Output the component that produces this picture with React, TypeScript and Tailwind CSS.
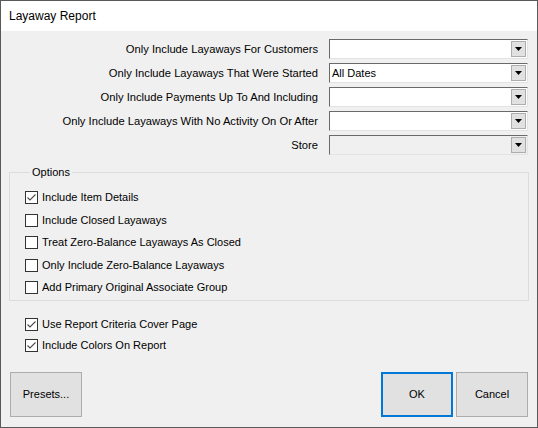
import React from "react";

const criteria = [
  { label: "Only Include Layaways For Customers", value: "" },
  { label: "Only Include Layaways That Were Started", value: "All Dates" },
  { label: "Only Include Payments Up To And Including", value: "" },
  { label: "Only Include Layaways With No Activity On Or After", value: "" },
  { label: "Store", value: "", disabled: true },
];

const options = [
  { label: "Include Item Details", checked: true },
  { label: "Include Closed Layaways", checked: false },
  { label: "Treat Zero-Balance Layaways As Closed", checked: false },
  { label: "Only Include Zero-Balance Layaways", checked: false },
  { label: "Add Primary Original Associate Group", checked: false },
];

function Combo({ value, disabled }: { value: string; disabled?: boolean }) {
  return (
    <div
      className={`flex h-[20px] w-[199px] items-center border border-t-[#6a6a6a] border-l-[#6a6a6a] border-r-[#e3e3e3] border-b-[#e3e3e3] ${
        disabled ? "bg-[#f0f0f0]" : "bg-white"
      }`}
    >
      <span className="flex-1 pl-[2px] leading-[16px]">{value}</span>
      <div className="mr-[1px] flex h-[16px] w-[15px] items-center justify-center border border-[#adadad] bg-[#e1e1e1]">
        <svg width="7" height="4" viewBox="0 0 7 4">
          <path d="M0 0h7L3.5 4z" fill="#000" />
        </svg>
      </div>
    </div>
  );
}

function Check({ label, checked }: { label: string; checked: boolean }) {
  return (
    <div className="flex h-[13px] items-center gap-[4px]">
      <div className="flex h-[13px] w-[13px] shrink-0 items-center justify-center border border-[#333] bg-white">
        {checked && (
          <svg width="11" height="11" viewBox="0 0 11 11">
            <path d="M1.5 5.5l2.5 2.5 5.5-5.5" fill="none" stroke="#4a4a4a" strokeWidth="1.1" />
          </svg>
        )}
      </div>
      <span className="leading-[13px]">{label}</span>
    </div>
  );
}

function Button({ label, focused }: { label: string; focused?: boolean }) {
  return (
    <button
      className={`flex h-[45px] w-[72px] items-center justify-center bg-[#e1e1e1] ${
        focused ? "border-2 border-[#0078d7]" : "border border-[#adadad]"
      }`}
    >
      {label}
    </button>
  );
}

export default function App() {
  return (
    <div className="flex h-[428px] w-[538px] flex-col border border-[#595959] bg-[#f0f0f0] font-['Liberation_Sans',Arial,sans-serif] text-[11px] text-black">
      {/* Title bar */}
      <div className="flex h-[30px] items-center bg-white pl-[8px] text-[12px]">Layaway Report</div>

      {/* Criteria */}
      <div className="flex flex-col gap-[4px] pr-[9px] pt-[8px]">
        {criteria.map((c) => (
          <div key={c.label} className="flex items-center justify-end gap-[11px]">
            <span className="text-[11.2px]">{c.label}</span>
            <Combo value={c.value} disabled={c.disabled} />
          </div>
        ))}
      </div>

      {/* Options group */}
      <fieldset className="mx-[8px] mt-[11px] border border-[#dcdcdc] pb-[6px] pl-[15px]">
        <legend className="ml-[5px] px-[2px] leading-[13px]">Options</legend>
        <div className="flex flex-col gap-[9.5px] pt-[12px]">
          {options.map((o) => (
            <Check key={o.label} label={o.label} checked={o.checked} />
          ))}
        </div>
      </fieldset>

      <div className="flex flex-col gap-[8px] pl-[24px] pt-[17px]">
        <Check label="Use Report Criteria Cover Page" checked />
        <Check label="Include Colors On Report" checked />
      </div>

      {/* Footer */}
      <div className="mt-auto flex items-end px-[9px] pb-[10px]">
        <Button label="Presets..." />
        <div className="ml-auto flex gap-[3px]">
          <Button label="OK" focused />
          <Button label="Cancel" />
        </div>
      </div>
    </div>
  );
}
